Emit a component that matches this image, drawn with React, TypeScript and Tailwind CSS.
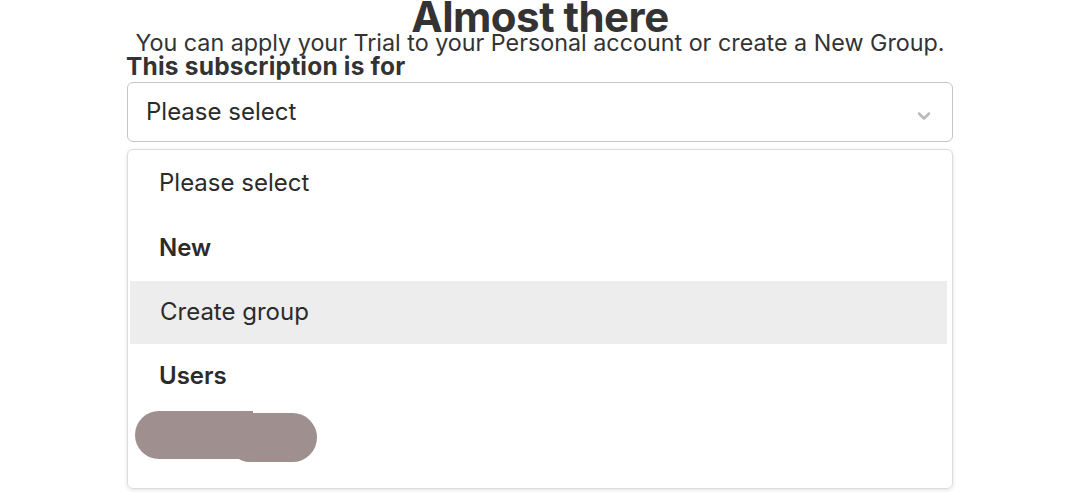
import { ChevronDown } from 'lucide-react';

const OPTIONS = [
  { label: 'Please select', kind: 'option', h: 'h-[64px]' },
  { label: 'New', kind: 'group', h: 'h-[66px]' },
  { label: 'Create group', kind: 'option', h: 'h-[63px]', active: true },
  { label: 'Users', kind: 'group', h: 'h-[64px]' },
];

export default function App() {
  return (
    <div className="w-[1076px] h-[502px] bg-white overflow-hidden pl-[4px] flex flex-col items-center text-[#333] font-['Inter',sans-serif]">
      <h1 className="font-bold text-[42px] leading-[40px] -mt-[3px] tracking-[-0.5px]">
        Almost there
      </h1>
      <p className="text-[23.3px] leading-[22px] -mt-[5.5px]">
        You can apply your Trial to your Personal account or create a New Group.
      </p>
      <div className="w-[826px] flex flex-col">
        <label className="font-bold text-[24.5px] leading-[24px] tracking-[0.2px] -ml-[1px]">
          This subscription is for
        </label>
        <div className="mt-[4px] h-[60px] border-[1.5px] border-[#c6c6c6] rounded-[6px] flex items-center justify-between pl-[18px] pr-[18px]">
          <span className="text-[24px] text-[#2b2b2b]">Please select</span>
          <ChevronDown size={20} strokeWidth={3} className="text-[#b9b9b9] mt-[8px]" />
        </div>
        <div className="mt-[7px] h-[340px] border border-[#dcdcdc] rounded-[6px] shadow-[0_1px_4px_rgba(0,0,0,0.12)] pt-[1px] px-[2px] flex flex-col text-[24px] text-[#2b2b2b]">
          {OPTIONS.map(o => (
            <div
              key={o.label}
              className={`${o.h} flex items-center ${o.active ? 'bg-[#ededed] pl-[30px] mr-[3px]' : 'pl-[29px]'} ${o.kind === 'group' ? 'font-semibold' : ''}`}
            >
              {o.label}
            </div>
          ))}
          <div className="flex items-center pl-[5px]">
            <div className="w-[118px] h-[48px] bg-[#9f8f8f] rounded-l-full -mr-[27px]"></div>
            <div className="w-[91px] h-[49px] bg-[#9f8f8f] rounded-full mt-[5px]"></div>
          </div>
        </div>
      </div>
    </div>
  );
}
